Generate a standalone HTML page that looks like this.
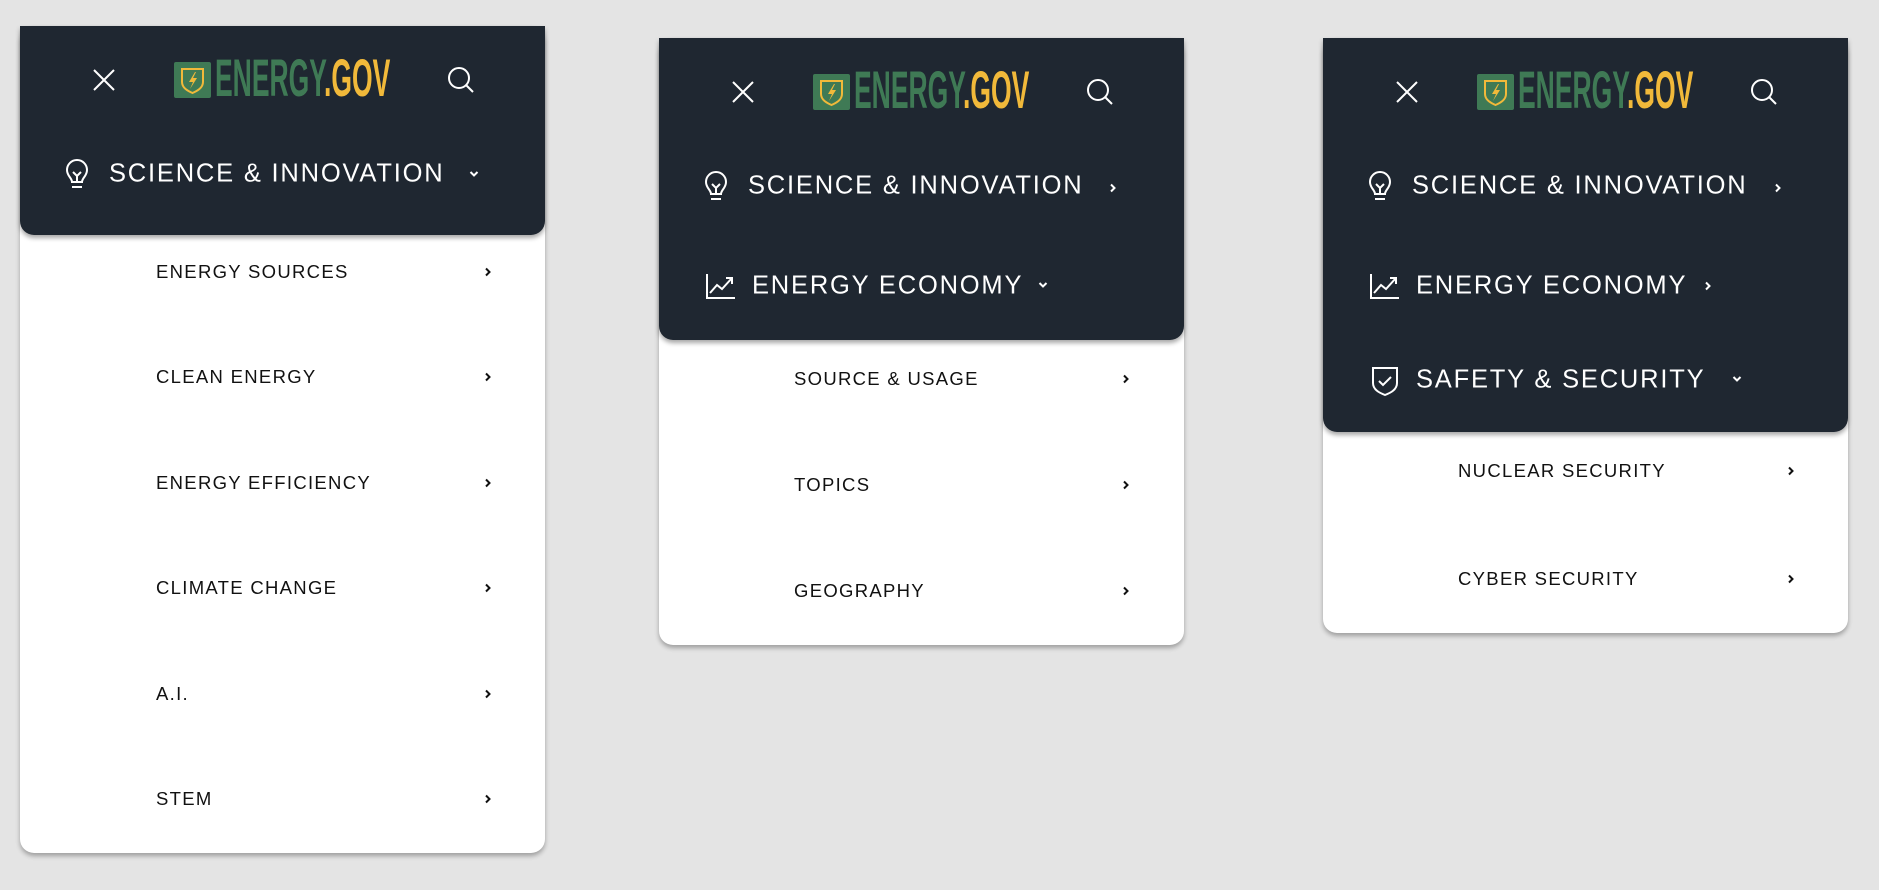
<!DOCTYPE html>
<html><head><meta charset="utf-8"><style>
*{margin:0;padding:0;box-sizing:border-box}
body{width:1879px;height:890px;background:#e4e4e4;position:relative;overflow:hidden;font-family:"Liberation Sans",sans-serif}
.p{position:absolute;width:525px;background:#fff;border-radius:14px;box-shadow:0 3px 5px rgba(0,0,0,.3)}
.d{position:absolute;left:0;top:0;width:525px;background:#1f2731;border-radius:0 0 14px 14px;box-shadow:0 3px 5px rgba(0,0,0,.35)}
.a{position:absolute;transform:translateY(-50%)}
.c{position:absolute;transform:translate(-50%,-50%)}
.t{color:#fff;font-size:25.5px;letter-spacing:1.8px;white-space:nowrap;line-height:1}
.s{color:#111;font-size:18.5px;letter-spacing:1.3px;white-space:nowrap;line-height:1}
.logo{position:absolute;left:154px;top:36px;width:218px;height:37px}
.logo .b{position:absolute;left:0;top:0;width:37px;height:36px;background:#3f7a55;border-radius:2px}
.logo .w{position:absolute;left:41px;top:-10px;font-weight:bold;font-size:53px;line-height:53px;transform:scaleX(.5);transform-origin:0 0;white-space:nowrap;color:#3f7a55}
.logo .w span{color:#f1b93a}
</style></head><body>

<!-- Panel 1 -->
<div class="p" style="left:20px;top:26px;height:827px">
 <div class="d" style="height:209px;border-radius:0 0 14px 14px">
  <svg class="c" style="left:84px;top:54px" width="24" height="24" viewBox="0 0 24 24"><path d="M2 2L22 22M22 2L2 22" stroke="#fff" stroke-width="2"/></svg>
  <div class="logo"><div class="b"><svg width="37" height="36" viewBox="0 0 37 36"><path d="M8 7H29V20C29 26 23 29 18.5 31C14 29 8 26 8 20Z" fill="none" stroke="#f1b93a" stroke-width="2"/><path d="M21 10L15 20H19L16 27L23 16H19L22 10Z" fill="#f1b93a"/></svg></div><div class="w">ENERGY<span>.GOV</span></div></div>
  <svg class="c" style="left:441px;top:54px" width="30" height="30" viewBox="0 0 30 30"><circle cx="13" cy="13" r="10" fill="none" stroke="#fff" stroke-width="2"/><path d="M20 20L27 27" stroke="#fff" stroke-width="2"/></svg>
  <svg class="c" style="left:57px;top:148px" width="26" height="32" viewBox="0 0 26 32"><path d="M8 24C8 20 3 18 3 12A10 10 0 0 1 23 12C23 18 18 20 18 24Z" fill="none" stroke="#fff" stroke-width="2"/><path d="M9 14L13 18L17 14M13 18V24M8 29H18" fill="none" stroke="#fff" stroke-width="2"/></svg>
  <div class="a t" style="left:89px;top:148px">SCIENCE &amp; INNOVATION</div>
  <svg class="c" style="left:454px;top:148px" width="10" height="8" viewBox="0 0 10 8"><path d="M1.5 2L5 5.5L8.5 2" fill="none" stroke="#fff" stroke-width="2"/></svg>
 </div>
 <div class="a s" style="left:136px;top:246px">ENERGY SOURCES</div>
 <div class="a s" style="left:136px;top:351px">CLEAN ENERGY</div>
 <div class="a s" style="left:136px;top:457px">ENERGY EFFICIENCY</div>
 <div class="a s" style="left:136px;top:562px">CLIMATE CHANGE</div>
 <div class="a s" style="left:136px;top:668px">A.I.</div>
 <div class="a s" style="left:136px;top:773px">STEM</div>
 <svg class="c" style="left:468px;top:246px" width="8" height="10" viewBox="0 0 8 10"><path d="M2 1.5L5.5 5L2 8.5" fill="none" stroke="#111" stroke-width="2"/></svg>
 <svg class="c" style="left:468px;top:351px" width="8" height="10" viewBox="0 0 8 10"><path d="M2 1.5L5.5 5L2 8.5" fill="none" stroke="#111" stroke-width="2"/></svg>
 <svg class="c" style="left:468px;top:457px" width="8" height="10" viewBox="0 0 8 10"><path d="M2 1.5L5.5 5L2 8.5" fill="none" stroke="#111" stroke-width="2"/></svg>
 <svg class="c" style="left:468px;top:562px" width="8" height="10" viewBox="0 0 8 10"><path d="M2 1.5L5.5 5L2 8.5" fill="none" stroke="#111" stroke-width="2"/></svg>
 <svg class="c" style="left:468px;top:668px" width="8" height="10" viewBox="0 0 8 10"><path d="M2 1.5L5.5 5L2 8.5" fill="none" stroke="#111" stroke-width="2"/></svg>
 <svg class="c" style="left:468px;top:773px" width="8" height="10" viewBox="0 0 8 10"><path d="M2 1.5L5.5 5L2 8.5" fill="none" stroke="#111" stroke-width="2"/></svg>
</div>

<!-- Panel 2 -->
<div class="p" style="left:659px;top:38px;height:607px">
 <div class="d" style="height:302px">
  <svg class="c" style="left:84px;top:54px" width="24" height="24" viewBox="0 0 24 24"><path d="M2 2L22 22M22 2L2 22" stroke="#fff" stroke-width="2"/></svg>
  <div class="logo"><div class="b"><svg width="37" height="36" viewBox="0 0 37 36"><path d="M8 7H29V20C29 26 23 29 18.5 31C14 29 8 26 8 20Z" fill="none" stroke="#f1b93a" stroke-width="2"/><path d="M21 10L15 20H19L16 27L23 16H19L22 10Z" fill="#f1b93a"/></svg></div><div class="w">ENERGY<span>.GOV</span></div></div>
  <svg class="c" style="left:441px;top:54px" width="30" height="30" viewBox="0 0 30 30"><circle cx="13" cy="13" r="10" fill="none" stroke="#fff" stroke-width="2"/><path d="M20 20L27 27" stroke="#fff" stroke-width="2"/></svg>
  <svg class="c" style="left:57px;top:148px" width="26" height="32" viewBox="0 0 26 32"><path d="M8 24C8 20 3 18 3 12A10 10 0 0 1 23 12C23 18 18 20 18 24Z" fill="none" stroke="#fff" stroke-width="2"/><path d="M9 14L13 18L17 14M13 18V24M8 29H18" fill="none" stroke="#fff" stroke-width="2"/></svg>
  <div class="a t" style="left:89px;top:148px">SCIENCE &amp; INNOVATION</div>
  <svg class="c" style="left:454px;top:150px" width="8" height="10" viewBox="0 0 8 10"><path d="M2 1.5L5.5 5L2 8.5" fill="none" stroke="#fff" stroke-width="2"/></svg>
  <svg class="c" style="left:62px;top:248px" width="30" height="26" viewBox="0 0 30 26"><path d="M1 1V25H29M4 20L11 12L16 16L26 5M20 5H26V11" fill="none" stroke="#fff" stroke-width="2"/></svg>
  <div class="a t" style="left:93px;top:248px">ENERGY ECONOMY</div>
  <svg class="c" style="left:384px;top:247px" width="10" height="8" viewBox="0 0 10 8"><path d="M1.5 2L5 5.5L8.5 2" fill="none" stroke="#fff" stroke-width="2"/></svg>
 </div>
 <div class="a s" style="left:135px;top:341px">SOURCE &amp; USAGE</div>
 <div class="a s" style="left:135px;top:447px">TOPICS</div>
 <div class="a s" style="left:135px;top:553px">GEOGRAPHY</div>
 <svg class="c" style="left:467px;top:341px" width="8" height="10" viewBox="0 0 8 10"><path d="M2 1.5L5.5 5L2 8.5" fill="none" stroke="#111" stroke-width="2"/></svg>
 <svg class="c" style="left:467px;top:447px" width="8" height="10" viewBox="0 0 8 10"><path d="M2 1.5L5.5 5L2 8.5" fill="none" stroke="#111" stroke-width="2"/></svg>
 <svg class="c" style="left:467px;top:553px" width="8" height="10" viewBox="0 0 8 10"><path d="M2 1.5L5.5 5L2 8.5" fill="none" stroke="#111" stroke-width="2"/></svg>
</div>

<!-- Panel 3 -->
<div class="p" style="left:1323px;top:38px;height:595px">
 <div class="d" style="height:394px">
  <svg class="c" style="left:84px;top:54px" width="24" height="24" viewBox="0 0 24 24"><path d="M2 2L22 22M22 2L2 22" stroke="#fff" stroke-width="2"/></svg>
  <div class="logo"><div class="b"><svg width="37" height="36" viewBox="0 0 37 36"><path d="M8 7H29V20C29 26 23 29 18.5 31C14 29 8 26 8 20Z" fill="none" stroke="#f1b93a" stroke-width="2"/><path d="M21 10L15 20H19L16 27L23 16H19L22 10Z" fill="#f1b93a"/></svg></div><div class="w">ENERGY<span>.GOV</span></div></div>
  <svg class="c" style="left:441px;top:54px" width="30" height="30" viewBox="0 0 30 30"><circle cx="13" cy="13" r="10" fill="none" stroke="#fff" stroke-width="2"/><path d="M20 20L27 27" stroke="#fff" stroke-width="2"/></svg>
  <svg class="c" style="left:57px;top:148px" width="26" height="32" viewBox="0 0 26 32"><path d="M8 24C8 20 3 18 3 12A10 10 0 0 1 23 12C23 18 18 20 18 24Z" fill="none" stroke="#fff" stroke-width="2"/><path d="M9 14L13 18L17 14M13 18V24M8 29H18" fill="none" stroke="#fff" stroke-width="2"/></svg>
  <div class="a t" style="left:89px;top:148px">SCIENCE &amp; INNOVATION</div>
  <svg class="c" style="left:455px;top:150px" width="8" height="10" viewBox="0 0 8 10"><path d="M2 1.5L5.5 5L2 8.5" fill="none" stroke="#fff" stroke-width="2"/></svg>
  <svg class="c" style="left:62px;top:248px" width="30" height="26" viewBox="0 0 30 26"><path d="M1 1V25H29M4 20L11 12L16 16L26 5M20 5H26V11" fill="none" stroke="#fff" stroke-width="2"/></svg>
  <div class="a t" style="left:93px;top:248px">ENERGY ECONOMY</div>
  <svg class="c" style="left:385px;top:248px" width="8" height="10" viewBox="0 0 8 10"><path d="M2 1.5L5.5 5L2 8.5" fill="none" stroke="#fff" stroke-width="2"/></svg>
  <svg class="c" style="left:62px;top:343px" width="28" height="32" viewBox="0 0 28 32"><path d="M2 3H26V18C26 25 19 28 14 30C9 28 2 25 2 18Z" fill="none" stroke="#fff" stroke-width="2"/><path d="M8 16L12 20L20 12" fill="none" stroke="#fff" stroke-width="2"/></svg>
  <div class="a t" style="left:93px;top:342px">SAFETY &amp; SECURITY</div>
  <svg class="c" style="left:414px;top:341px" width="10" height="8" viewBox="0 0 10 8"><path d="M1.5 2L5 5.5L8.5 2" fill="none" stroke="#fff" stroke-width="2"/></svg>
 </div>
 <div class="a s" style="left:135px;top:433px">NUCLEAR SECURITY</div>
 <div class="a s" style="left:135px;top:541px">CYBER SECURITY</div>
 <svg class="c" style="left:468px;top:433px" width="8" height="10" viewBox="0 0 8 10"><path d="M2 1.5L5.5 5L2 8.5" fill="none" stroke="#111" stroke-width="2"/></svg>
 <svg class="c" style="left:468px;top:541px" width="8" height="10" viewBox="0 0 8 10"><path d="M2 1.5L5.5 5L2 8.5" fill="none" stroke="#111" stroke-width="2"/></svg>
</div>

</body></html>
